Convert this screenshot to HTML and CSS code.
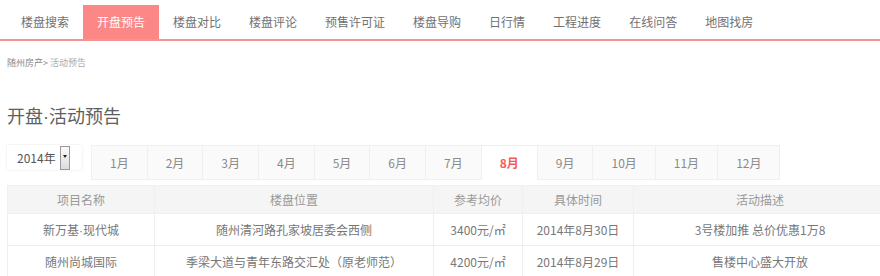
FILE: index.html
```html
<!DOCTYPE html>
<html lang="zh-CN">
  <head>
    <meta charset="UTF-8" />
    <meta name="viewport" content="width=device-width, initial-scale=1.0" />
    <title>开盘·活动预告</title>
    <link rel="stylesheet" href="styles.css">
  </head>
  <body>
    <div class="nav">
      <ul class="wrap nav-list">
        <li>楼盘搜索</li>
        <li class="on">开盘预告</li>
        <li>楼盘对比</li>
        <li>楼盘评论</li>
        <li>预售许可证</li>
        <li>楼盘导购</li>
        <li>日行情</li>
        <li>工程进度</li>
        <li>在线问答</li>
        <li>地图找房</li>
      </ul>
    </div>

    <div class="wrap">
      <p class="crumb"><span class="crumb-home">随州房产&gt;</span> <span class="crumb-cur">活动预告</span></p>

      <h1 class="title">开盘<span class="dot">·</span>活动预告</h1>

      <div class="filter">
        <div class="year">
          <span class="year-text">2014年</span>
          <span class="year-btn"><i></i></span>
        </div>
        <ul class="months">
          <li>1月</li>
          <li>2月</li>
          <li>3月</li>
          <li>4月</li>
          <li>5月</li>
          <li>6月</li>
          <li>7月</li>
          <li class="on">8月</li>
          <li>9月</li>
          <li>10月</li>
          <li>11月</li>
          <li>12月</li>
        </ul>
      </div>

      <table class="list">
        <colgroup>
          <col class="c1">
          <col class="c2">
          <col class="c3">
          <col class="c4">
          <col class="c5">
        </colgroup>
        <thead>
          <tr>
            <th>项目名称</th>
            <th>楼盘位置</th>
            <th>参考均价</th>
            <th>具体时间</th>
            <th>活动描述</th>
          </tr>
        </thead>
        <tbody>
          <tr>
            <td>新万基<span class="dot">·</span>现代城</td>
            <td>随州清河路孔家坡居委会西侧</td>
            <td>3400元/㎡</td>
            <td>2014年8月30日</td>
            <td>3号楼加推 总价优惠1万8</td>
          </tr>
          <tr>
            <td>随州尚城国际</td>
            <td>季梁大道与青年东路交汇处（原老师范）</td>
            <td>4200元/㎡</td>
            <td>2014年8月29日</td>
            <td>售楼中心盛大开放</td>
          </tr>
        </tbody>
      </table>
    </div>
  </body>
</html>
```

FILE: styles.css
```css
* {
  padding: 0;
  margin: 0;
}
html,
body {
  overflow: hidden;
}
body {
  font-family: "Noto Sans CJK SC", sans-serif;
  font-size: 12px;
  color: #777;
  background-color: #fff;
  width: 880px;
}
ul {
  list-style: none;
}
.dot {
  font-family: "Liberation Sans", sans-serif;
}

.wrap {
  width: 880px;
  padding-left: 7px;
}

/* top nav */
.nav {
  padding-top: 5px;
  border-bottom: 2px solid #f79393;
}
.nav-list {
  display: flex;
}
.nav-list li {
  padding: 0 14px;
  height: 34px;
  line-height: 34px;
  color: #717171;
  white-space: nowrap;
}
.nav-list li.on {
  background-color: #fb8787;
  color: #fff;
}

/* breadcrumb */
.crumb {
  margin-top: 16px;
  font-size: 9px;
  line-height: 12px;
  color: #888;
}
.crumb-cur {
  color: #aaa;
}

.title {
  margin-top: 34px;
  font-size: 18px;
  line-height: 24px;
  font-weight: normal;
  color: #606060;
}

/* year + month tabs */
.filter {
  display: flex;
  align-items: flex-start;
  height: 34px;
  margin-top: 16px;
}
.year {
  width: 75px;
  height: 25px;
  display: flex;
  align-items: center;
  box-shadow: 0 0 2px #e2e2e2;
  margin-right: 9px;
}
.year-text {
  padding-left: 10px;
  width: 43px;
  color: #555;
}
.year-btn {
  width: 10px;
  height: 24px;
  border: 1px solid #999;
  background: linear-gradient(#fafafa, #dcdcdc);
  display: flex;
  justify-content: center;
  padding-top: 8px;
  box-sizing: border-box;
}
.year-btn i {
  width: 0;
  height: 0;
  border-left: 2px solid transparent;
  border-right: 2px solid transparent;
  border-top: 3px solid #222;
}
.months {
  display: flex;
}
.months li {
  padding: 0 18px;
  height: 33px;
  line-height: 33px;
  background-color: #fafafa;
  border: 1px solid #f0f0f0;
  border-left: 0;
  color: #8a8a8a;
  white-space: nowrap;
}
.months li:first-child {
  border-left: 1px solid #f0f0f0;
}
.months li.on {
  background-color: #fff;
  color: #f45c5c;
  font-weight: bold;
  border-bottom-color: #fff;
}

/* list table */
.list {
  margin-top: 6px;
  width: 879px;
  border-collapse: collapse;
  table-layout: fixed;
  text-align: center;
}
.c1 { width: 147px; }
.c2 { width: 279px; }
.c3 { width: 89px; }
.c4 { width: 111px; }
.c5 { width: 253px; }
.list th {
  height: 27px;
  font-weight: normal;
  color: #999;
  background-color: #f5f5f5;
  border: 1px solid #f0f0f0;
}
.list td {
  height: 31px;
  color: #777;
  border: 1px solid #eee;
  white-space: nowrap;
}
```
